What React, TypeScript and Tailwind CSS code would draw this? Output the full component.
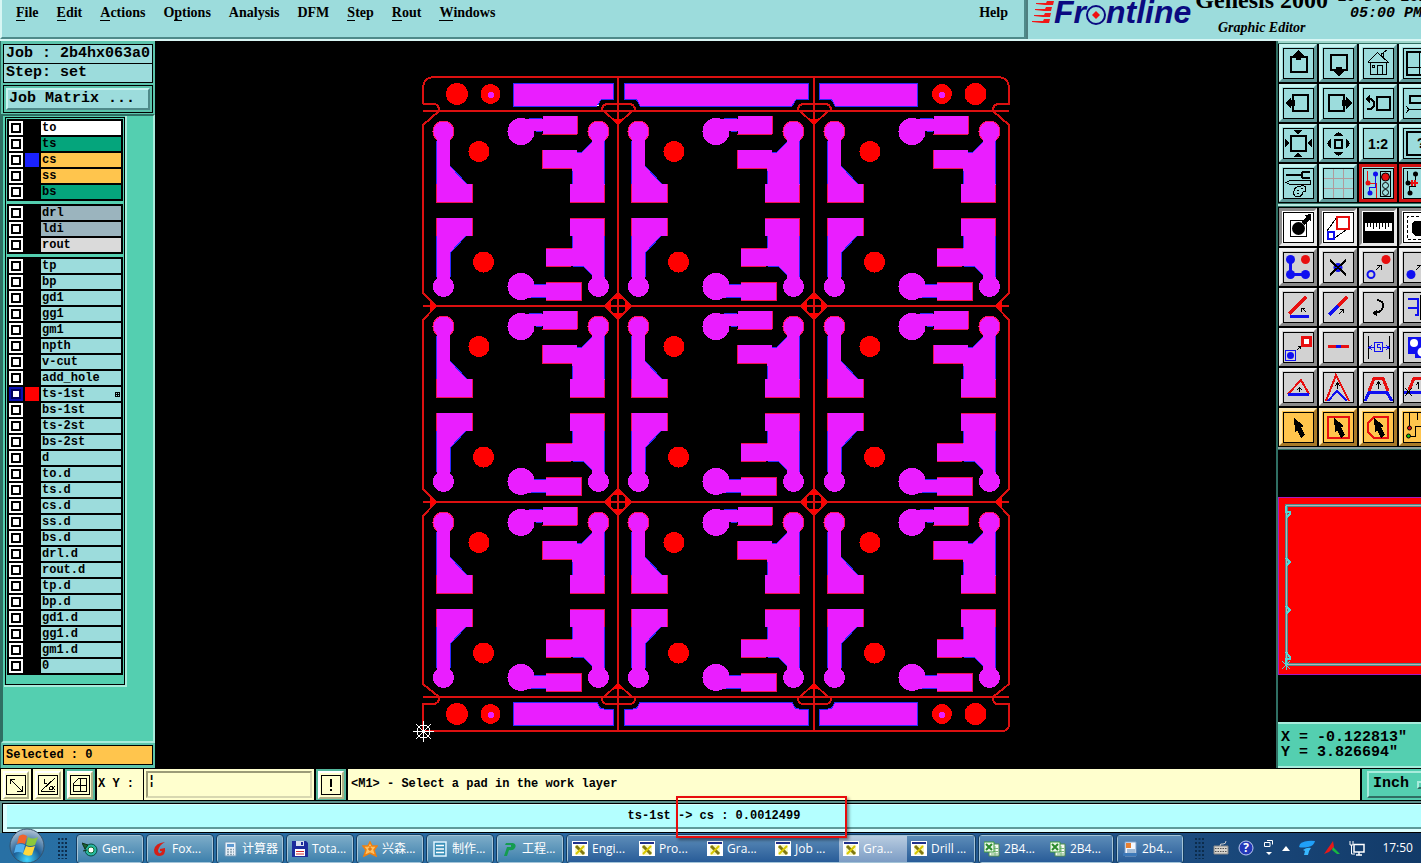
import React from "react";

type Kids = { children?: React.ReactNode };

const MENUS: [string, string, string][] = [
  ["", "F", "ile"],
  ["", "E", "dit"],
  ["", "A", "ctions"],
  ["O", "p", "tions"],
  ["Analysis", "", ""],
  ["DFM", "", ""],
  ["", "S", "tep"],
  ["", "R", "out"],
  ["", "W", "indows"],
];

function MenuBar() {
  return (
    <nav className="flex min-w-0 flex-1 items-start justify-between border-r-2 border-b-2 border-l-2 border-r-[#4f8a8a] border-b-[#4f8a8a] border-l-[#d8f6f4] bg-[#9cdcdc] pr-4 pl-[14px] pt-1">
      <div className="flex gap-[18px]">
        {MENUS.map(([a, u, b]) => (
          <button key={a + u + b} className="flex h-[18px] text-[14px] leading-[18px] font-bold">
            {a}
            {u && <span className="h-[17px] border-b border-black">{u}</span>}
            {b}
          </button>
        ))}
      </div>
      <button className="text-[14px] leading-[18px] font-bold">Help</button>
    </nav>
  );
}

function Logo() {
  return (
    <div className="flex w-[395px] shrink-0 items-start overflow-hidden border-l-2 border-[#4f7f80] bg-[#9cdcdc] pl-1">
      <svg width="22" height="26" viewBox="0 0 22 26" className="shrink-0" fill="#f01818">
        <path d="M4 3L14 3L15 1H22L21 5H13L4 4ZM3 9L13 9L14 7H20L19 11H12L3 10ZM2 15L12 15L13 13H19L18 17H11L2 16ZM0 21L11 21L12 19H18L17 23H10L0 22Z" />
      </svg>
      <div className="flex items-start font-['Liberation_Sans',sans-serif] text-[32px] leading-[24px] font-bold text-[#0a0a80] italic">
        Fr
        <svg width="20" height="26" viewBox="0 0 20 26" className="shrink-0">
          <circle cx="10" cy="15" r="9" fill="#9cdcdc" stroke="#0a0a80" strokeWidth="2" />
          <path d="M10 11L14 15L10 19L6 15Z" fill="#f01010" />
        </svg>
        ntline
      </div>
      <div className="-mt-3 ml-1 flex shrink-0 flex-col items-center">
        <span className="text-[24px] leading-[24px] font-bold">Genesis 2000</span>
        <span className="mt-2 text-[14px] leading-[16px] font-bold italic">Graphic Editor</span>
      </div>
      <div className="-mt-[10px] ml-[10px] flex shrink-0 flex-col items-start font-['Liberation_Mono',monospace] text-[15px] leading-[16px] font-bold italic">
        <span>10 Dec 2015</span>
        <span className="pl-3">05:00 PM</span>
      </div>
    </div>
  );
}

type Layer = { name: string; bg?: string; swatch?: string; work?: boolean };
const GROUPS: Layer[][] = [
  [
    { name: "to", bg: "bg-white" },
    { name: "ts", bg: "bg-[#05a57c]" },
    { name: "cs", bg: "bg-[#ffc54d]", swatch: "bg-[#1a22ff]" },
    { name: "ss", bg: "bg-[#ffc54d]" },
    { name: "bs", bg: "bg-[#05a57c]" },
  ],
  [
    { name: "drl", bg: "bg-[#9bb4be]" },
    { name: "ldi", bg: "bg-[#9bb4be]" },
    { name: "rout", bg: "bg-[#dadada]" },
  ],
  [
    "tp", "bp", "gd1", "gg1", "gm1", "npth", "v-cut", "add_hole", "ts-1st", "bs-1st", "ts-2st", "bs-2st", "d",
    "to.d", "ts.d", "cs.d", "ss.d", "bs.d", "drl.d", "rout.d", "tp.d", "bp.d", "gd1.d", "gg1.d", "gm1.d", "0",
  ].map((name) => (name === "ts-1st" ? { name, swatch: "bg-[#ff0000]", work: true } : { name })),
];

function LayerRow({ layer }: { layer: Layer }) {
  return (
    <label className="flex h-[14px] gap-[2px]">
      <input
        type="checkbox"
        defaultChecked={layer.work}
        className={
          "m-0 h-[14px] w-[14px] shrink-0 appearance-none bg-white " +
          (layer.work
            ? "shadow-[inset_0_0_0_2px_#0a10b0,inset_0_0_0_4px_#00005c]"
            : "shadow-[inset_0_0_0_2px_white,inset_0_0_0_4px_black]")
        }
      />
      <span className={"w-[14px] shrink-0 " + (layer.swatch ?? "bg-black")} />
      <span
        className={"flex flex-1 items-center justify-between pr-px pl-px text-[12px] leading-[14px] " + (layer.bg ?? "bg-[#9cdcdc]")}
      >
        {layer.name}
        {layer.work && (
          <svg width="5" height="5" viewBox="0 0 5 5" shapeRendering="crispEdges">
            <path d="M0 0H5V5H0ZM1 1V2H2V1ZM3 1V2H4V1ZM1 3V4H2V3ZM3 3V4H4V3Z" fillRule="evenodd" />
          </svg>
        )}
      </span>
    </label>
  );
}

function LeftPanel() {
  return (
    <aside className="flex w-[155px] shrink-0 flex-col border-l border-[#2f6f63] bg-[#5cc4ac] pb-[3px] font-['Liberation_Mono',monospace] font-bold">
      <div className="mx-[2px] mt-[3px] border border-black bg-[#9cdcdc] text-[15px] leading-[18px]">
        <div className="border-b border-black pl-[2px] whitespace-pre">Job : 2b4hx063a0</div>
        <div className="pl-[2px] whitespace-pre">Step: set</div>
      </div>
      <div className="mx-[2px] mt-[2px] border border-black p-[2px]">
        <button className="block h-[22px] w-full border-2 border-t-[#c8f4f0] border-r-[#4f8a8a] border-b-[#4f8a8a] border-l-[#c8f4f0] bg-[#9cdcdc] pl-px text-left text-[15px] leading-[18px]">
          Job Matrix ...
        </button>
      </div>
      <div className="mt-px flex flex-1 flex-col border-2 border-t-[#2f6f63] border-r-[#a8ecdc] border-b-[#a8ecdc] border-l-[#2f6f63] bg-[#54cfb0]">
        <div className="mr-[26px] ml-px border-r-2 border-b-2 border-[#a8ecdc]">
          <div className="mt-px ml-px flex flex-col gap-[3px] border border-black p-px pb-[9px]">
            {GROUPS.map((g, i) => (
              <div key={i} className="flex flex-col gap-[2px] bg-black p-[2px]">
                {g.map((l) => (
                  <LayerRow key={l.name} layer={l} />
                ))}
              </div>
            ))}
          </div>
        </div>
      </div>
      <div className="mx-[2px] mt-[2px] h-5 border border-black bg-[#ffc54d] pl-[2px] text-[12px] leading-[18px]">Selected : 0</div>
    </aside>
  );
}

const X = [423, 618, 814, 1009];
const Y = [111, 306, 502, 697];

function Cell({ x, y }: { x: number; y: number }) {
  return (
    <g transform={`translate(${x} ${y})`}>
      <g fill="#ea1eff">
        <circle cx="20.500" cy="20.500" r="10.500" stroke="#ff1060" />
        <path d="M13.500 20H27V55L44 73H49V91H13.500Z" />
        <path d="M13.500 107H49V125H43L27 142V176H13.500Z" />
        <circle cx="20.500" cy="175.500" r="10.500" />
        <circle cx="98" cy="20.500" r="13.500" />
        <path d="M98 7.500H120V5H154V23H120V20H98Z" />
        <circle cx="175.500" cy="20.500" r="10.500" stroke="#ff1060" />
        <path d="M181.500 20V91H147V73H149V57H119V39H154V41H159L169 31V20Z" />
        <path d="M147 107H181.500V176H169V164L160 155H123V137H149V125H147Z" />
        <circle cx="175.500" cy="175.500" r="10.500" />
        <circle cx="98" cy="175.500" r="13.500" />
        <path d="M98 173.500H123V171H158V189H123V186.500H98Z" />
      </g>
      <g fill="none" stroke="#2a2aff">
        <path d="M13.500 30V73M27 55L44 73M13.500 125V166M43 125L27 142V166M106 7.500H119M113 20H119M154 41H159L169 31M181.500 30V73M149 60V73M149 125V137M150 155H160L169 164M181.500 125V166M111 173.500H123M108 186.500H123" />
      </g>
      <g fill="none" stroke="#f01050">
        <path d="M13.500 73V91H49V73M49 107V125M13.500 107V125M119 23H154M154 5V23M149 57H119V39M147 91H181.500V74M181.500 125V107H147M123 155H148M123 137H149M123 171H158V189H123" />
      </g>
      <circle cx="56" cy="40.500" r="10.500" fill="#f00" />
      <circle cx="60.500" cy="151" r="10.500" fill="#f00" />
    </g>
  );
}

function Board() {
  return (
    <svg
      viewBox="155 41 1121 727"
      className="h-full w-full"
      shapeRendering="crispEdges"
      role="img"
      aria-label="Panel artwork"
    >
      {[0, 1, 2].map((r) => [0, 1, 2].map((c) => <Cell key={`${r}${c}`} x={X[c]} y={Y[r]} />))}
      <g fill="#ea1eff" stroke="#2a2aff">
        <path d="M513 83H613V99H604Q600 99 599 103L597 106H513Z" />
        <path d="M624 83H808V99H799Q795 99 794 103L792 106H640L638 102Q637 99 633 99H624Z" />
        <path d="M819 83H917V106H835L833 102Q832 99 828 99H819Z" />
        <path d="M513 702H597L599 706Q600 709 604 709H613V725H513Z" />
        <path d="M640 702H792L794 706Q795 709 799 709H808V725H624V709H633Q637 709 638 706Z" />
        <path d="M835 702H917V725H819V709H828Q832 709 833 706Z" />
      </g>
      <g fill="none" stroke="#dc1010" strokeWidth="2">
        <path d="M423 104V89Q423 77 435 77H997Q1009 77 1009 89V104H998Q993 105 993 110V111L1009 125V293L996 306L1009 320V489L996 502L1009 516V684L993 697V700Q994 704 998 704H1009V724Q1009 731 1002 731H423V704H434Q439 703 439 698V697L423 684V516L436 502L423 489V320L436 306L423 293V125L439 111V109Q438 104 434 104H423" />
        <path d="M423 111H1009M423 306H1009M423 502H1009M423 697H1009M618 77V731M814 77V731" />
        {[618, 814].map((x) => (
          <g key={x} transform={`translate(${x} 0)`}>
            <path d="M-16 111V109Q-15 104 -10 104H11Q16 104 17 109V111M-14 111L0 124L14 111" />
            <path d="M-16 697V700Q-15 704 -10 704H11Q16 704 17 700V697M-14 697L0 684L14 697" />
            {[306, 502].map((y) => (
              <g key={y}>
                <path d={`M-13 ${y}L0 ${y - 13}L13 ${y}L0 ${y + 13}Z`} />
                <path
                  d={`M-13 ${y}L-7 ${y - 5}V${y + 5}ZM13 ${y}L7 ${y - 5}V${y + 5}ZM0 ${y - 13}L5 ${y - 7}H-5ZM0 ${y + 13}L5 ${y + 7}H-5Z`}
                  fill="#f00"
                  stroke="none"
                />
              </g>
            ))}
            <path d="M0 125L-5 119H5ZM0 683L-5 689H5Z" fill="#f00" stroke="none" />
          </g>
        ))}
        {[306, 502].map((y) => (
          <path
            key={y}
            d={`M437 ${y}L430 ${y - 5}V${y + 5}ZM995 ${y}L1002 ${y - 5}V${y + 5}Z`}
            fill="#f00"
            stroke="none"
          />
        ))}
      </g>
      {[94, 714].map((y) => (
        <g key={y} fill="#f00">
          <circle cx="457" cy={y} r="11" />
          <circle cx="490.500" cy={y} r="10" />
          <circle cx="942" cy={y} r="10" />
          <circle cx="975.500" cy={y} r="11" />
          <circle cx="491" cy={y + 1} r="3" fill="#ea1eff" />
          <circle cx="942" cy={y + 1} r="3" fill="#ea1eff" />
        </g>
      ))}
      <g fill="none" stroke="#fff">
        <path d="M423.500 721V742M413 731.500H434M416 724L431 739M431 724L416 739" />
        <circle cx="423.500" cy="731.500" r="6.500" />
        <path d="M597 105.500H599" />
      </g>
    </svg>
  );
}

const TONES = {
  teal: "border-t-[#c8f4f0] border-l-[#c8f4f0] border-r-[#5f9a9a] border-b-[#5f9a9a] bg-[#9cdcdc]",
  red: "border-[#d01414] bg-[#9cdcdc]",
  white: "border-t-[#8c8c8c] border-l-[#8c8c8c] border-r-[#e8e8e8] border-b-[#e8e8e8] bg-white",
  gray: "border-t-[#f2f2f2] border-l-[#f2f2f2] border-r-[#8a8a8a] border-b-[#8a8a8a] bg-[#d2d2d2]",
  gold: "border-t-[#ffe9b0] border-l-[#ffe9b0] border-r-[#a87a28] border-b-[#a87a28] bg-[#ffc54d]",
};

function Tool({ name, tone, children }: Kids & { name: string; tone: keyof typeof TONES }) {
  return (
    <button aria-label={name} className={"flex h-[38px] w-[38px] items-center justify-center border-[3px] " + TONES[tone]}>
      <svg
        width="31"
        height="31"
        viewBox="0 0 31 31"
        fill="none"
        stroke="#000"
        shapeRendering="crispEdges"
        className="[&_circle]:[shape-rendering:auto]"
      >
        <rect x=".5" y=".5" width="30" height="30" />
        {children}
      </svg>
    </button>
  );
}

const RED = "#e81010";
const BLUE = "#1010f0";
const ARROW = "M11 6L21 14L18 15L22 23L18 26L14 18L12 20Z";

const VIEW_TOOLS: [string, keyof typeof TONES, React.ReactNode][] = [
  ["Pan up", "teal", <><path strokeWidth="2" d="M8 9H24V24H8Z" /><path fill="#000" stroke="none" d="M15.500 2L21 8H18V12H13V8H10Z" /></>],
  ["Pan down", "teal", <><path strokeWidth="2" d="M8 7H24V22H8Z" /><path fill="#000" stroke="none" d="M16 29L21 23H19V19H13V23H11Z" /></>],
  ["Home view", "teal", <path d="M4.500 14.500L14.500 4.500L25.500 14.500H4.500M7.500 15V26.500H23.500V15M14.500 26V17.500H19.500V26M9.500 17.500H11.500V19.500H9.500ZM18.500 8V5M20.500 10V5H18M24 2L20 5" />],
  ["Window view", "teal", <><path strokeWidth="2" d="M31 4H4V27H31" /><path d="M16.500 4V27M4 19.500H31" /></>],
  ["Pan left", "teal", <><path strokeWidth="2" d="M10 7H25V23H10Z" /><path fill="#000" stroke="none" d="M2 15L8 9V12H12V18H8V21Z" /></>],
  ["Pan right", "teal", <><path strokeWidth="2" d="M6 7H21V23H6Z" /><path fill="#000" stroke="none" d="M29 15L23 9V12H19V18H23V21Z" /></>],
  ["Previous view", "teal", <><path strokeWidth="2" d="M14 9H27V22H14ZM4 21H8Q11 20 11 16Q11 11 6 11" /><path fill="#000" stroke="none" d="M2 11L7 6V15Z" /></>],
  ["Pop view", "teal", <><path strokeWidth="2" d="M31 8H7V15H31" /><path d="M3 18L6 21.500L3 25M6 21.500H31" /></>],
  ["Zoom in", "teal", <><path strokeWidth="2" d="M8 8H23V23H8Z" /><path fill="#000" stroke="none" d="M10 2H20L15 6ZM10 29H20L15 25ZM2 10V20L6 15ZM29 10V20L25 15Z" /></>],
  ["Zoom out", "teal", <><path strokeWidth="2" d="M12 12H19V20H12Z" /><path fill="#000" stroke="none" d="M10 8H21L15.500 4ZM10 24H21L15.500 28ZM8 10V21L4 15.500ZM23 10V21L27 15.500Z" /></>],
  ["Scale", "teal", <text x="15" y="21" textAnchor="middle" fill="#000" stroke="none" className="font-['Liberation_Sans',sans-serif] text-[14px] font-bold">1:2</text>],
  ["Query", "teal", <><path strokeWidth="2" d="M31 4H4V27H31" /><text x="14" y="20" fill="#000" stroke="none" className="font-['Liberation_Mono',monospace] text-[14px] font-bold">?</text></>],
  ["Settings", "teal", <><path strokeWidth="2" d="M3 7H18M27 4H20L18 7L20 10H27" /><path d="M3 14.500L7 12.500H27V16.500H7ZM11 23Q12 18 18 18Q23 17 23 21Q23 24 20 24Q19 29 14 29Q10 29 11 23ZM14 22H16M18 20H20M14 25H16" /></>],
  ["Grid", "teal", <path stroke="#b09a9c" d="M10.500 1V30M20.500 1V30M1 10.500H30M1 20.500H30" />],
  ["Online DRC", "red", <><path stroke={RED} d="M4.500 3V15.500H13.500V30" /><path stroke={BLUE} d="M12.500 6V19H6V25" /><circle cx="5" cy="15" r="2.500" fill={RED} stroke="none" /><circle cx="12.500" cy="6" r="2.500" fill={BLUE} stroke="none" /><circle cx="7" cy="25" r="2.500" fill={BLUE} stroke="none" /><path d="M17.500 3.500H27.500V28.500H17.500Z" /><circle cx="22.500" cy="9" r="4" fill={RED} /><circle cx="22.500" cy="17.500" r="3" /><circle cx="22.500" cy="24.500" r="3" /></>],
  ["Net check", "red", <><path d="M12.500 6V18.500H6V25M4.500 3V15" /><path stroke={RED} strokeWidth="2" d="M6 15H15M9 12V18M12 12V18" /><circle cx="5" cy="15" r="2.500" fill="#000" stroke="none" /><circle cx="12.500" cy="6" r="2.500" fill="#000" stroke="none" /><circle cx="7" cy="25" r="2.500" fill="#000" stroke="none" /><path d="M18.500 1V30" /></>],
];

const EDIT_TOOLS: [string, keyof typeof TONES, React.ReactNode][] = [
  ["Resize pad", "white", <><path d="M7.500 8.500H23.500V24.500H7.500Z" /><circle cx="15.500" cy="16.500" r="6.500" fill="#000" stroke="none" /><path fill="#000" stroke="none" d="M28 2V9L26 8L21 13L18 10L23 5L21 3Z" /></>],
  ["Transform", "white", <><path d="M4 19L14 5M10 27L26 16" /><path stroke={RED} strokeWidth="2" d="M14 5H26V17H14Z" /><path stroke={BLUE} strokeWidth="2" d="M5 20H11V27H5Z" /></>],
  ["Measure", "white", <><path fill="#000" d="M1 1H30V30H1Z" /><path fill="#fff" stroke="none" d="M2 11H29V19H2Z" /><path d="M4.500 11V15M7.500 11V15M10.500 11V17M13.500 11V15M16.500 11V17M19.500 11V15M22.500 11V17M25.500 11V15" /></>],
  ["Select pad", "white", <><path strokeDasharray="3 2" d="M31 4.500H4.500V27.500H31" /><path fill="#000" d="M9 12L12 9H20V23H12L9 20Z" /></>],
  ["Copy", "gray", <><path stroke={BLUE} strokeWidth="3" d="M7.500 7V22.500H23" /><circle cx="7.500" cy="7.500" r="4.500" fill={BLUE} stroke="none" /><circle cx="7.500" cy="22.500" r="4.500" fill={BLUE} stroke="none" /><circle cx="22.500" cy="22.500" r="4.500" fill={BLUE} stroke="none" /><circle cx="22.500" cy="7.500" r="4.500" fill={RED} stroke="none" /></>],
  ["Delete", "gray", <><circle cx="15" cy="15.500" r="4.500" fill={BLUE} stroke="none" /><path strokeWidth="2" d="M7 8L23 23M23 8L7 23" /></>],
  ["Move", "gray", <><circle cx="8" cy="22.500" r="3.500" stroke={BLUE} strokeWidth="2" /><circle cx="23" cy="7.500" r="4.500" fill={RED} stroke="none" /><path d="M13 18L18 13M14 13.500H18.500V18" /></>],
  ["Move to layer", "gray", <><circle cx="8" cy="22.500" r="4.500" fill={BLUE} stroke="none" /><path d="M13 18L18 13M14 13.500H18.500V18" /></>],
  ["Rotate line", "gray", <><path stroke={RED} strokeWidth="3" d="M6 22L23 5" /><path stroke={BLUE} strokeWidth="3" d="M7 24.500H26" /><path d="M23 20L19 16M18.500 20V16.500H22" /></>],
  ["Stretch line", "gray", <><path stroke={BLUE} strokeWidth="3" d="M6 23L15 14" /><path stroke={RED} strokeWidth="3" d="M15 14L24 5" /><path d="M16 22L20 18M17 17.500H20.500V21" /></>],
  ["Arc", "gray", <><path strokeWidth="2" d="M14 8Q21 9 20 15Q19 20 12 21" /><path d="M10 21L13 19V23Z" fill="#000" /></>],
  ["Align", "gray", <><path stroke={BLUE} strokeWidth="2" d="M5 7H15V24M5 16H15V23H12" /><path d="M17.500 3V28" /></>],
  ["Copy pad", "gray", <><path stroke={RED} strokeWidth="3" d="M19 5H27V13H19Z" fill="#fff" /><path stroke={BLUE} d="M2.500 18.500H12.500V28.500H2.500Z" /><circle cx="7.500" cy="23.500" r="3.500" fill={BLUE} stroke="none" /><path d="M14 18L18 14M15 14.500H17.500V17" /></>],
  ["Join", "gray", <><path stroke={RED} strokeWidth="3" d="M5 14.500H26" /><path stroke={BLUE} strokeWidth="3" d="M13 14.500H18" /></>],
  ["Spacing", "gray", <><path d="M5.500 4V27M26.500 4V27" /><path stroke={BLUE} d="M7 15.500H11M20 15.500H25M9 13L6 15.500L9 18M23 13L26 15.500L23 18M11.500 10.500H19.500V19.500H11.500ZM17 12.500H14.500V15.500H17.500V18M14 15.500H18" /></>],
  ["Surface", "gray", <><path fill={BLUE} stroke="none" d="M5 5H20V10H31V26H12V22H5Z" /><circle cx="11" cy="11" r="4" fill="#fff" stroke="none" /><circle cx="19" cy="20" r="4.500" fill="#fff" stroke="none" /></>],
  ["Angle", "gray", <><path stroke={RED} strokeWidth="2" d="M5 22L18 8L26 22" /><path stroke={BLUE} strokeWidth="3" d="M5 22.500H26" /><path d="M16.500 20V16M14 18L16.500 15.500L19 18" /></>],
  ["Peak", "gray", <><path stroke={RED} strokeWidth="2" d="M3 29L13 3L26 29" /><path stroke={BLUE} strokeWidth="2" d="M5 29L14 19L24 29" /><path d="M14.500 17V11M12 14L14.500 11L17 14" /></>],
  ["Trapezoid", "gray", <><path stroke={BLUE} strokeWidth="3" d="M2 29L6 20.500H24L29 29" /><path stroke={RED} strokeWidth="3" d="M6 19L11 6.500H20L25 19" /><path d="M15.500 17V10M13 13L15.500 10L18 13" /></>],
  ["Trapezoid trim", "gray", <><path stroke={BLUE} strokeWidth="3" d="M1 20.500H31" /><path stroke={RED} strokeWidth="3" d="M6 18L11 6.500H31" /><path d="M15.500 17V10M13 13L15.500 10M2 16L9 24M9 16L2 24" /></>],
  ["Select", "gold", <path fill="#000" stroke="none" d={ARROW} />],
  ["Select in frame", "gold", <><path stroke={RED} strokeWidth="2" d="M5 5H26V26H5Z" /><path fill="#000" stroke="none" d={ARROW} /></>],
  ["Select in polygon", "gold", <><path stroke={RED} strokeWidth="2" d="M11 5H25V26H11L5 20V11Z" /><path fill="#000" stroke="none" d={ARROW} /></>],
  ["Select net", "gold", <><path d="M6.500 1V14M7 24.500H12.500V14.500H18V5.500H31M14.500 1V8" /><circle cx="6.500" cy="16" r="2" fill={RED} /><circle cx="5.500" cy="24" r="2" fill="#10c010" /></>],
];

function ToolGrid({ tools }: { tools: [string, keyof typeof TONES, React.ReactNode][] }) {
  return (
    <div className="grid w-[161px] grid-cols-4 gap-y-[2px] bg-black pl-px">
      {tools.map(([name, tone, art]) => (
        <Tool key={name} name={name} tone={tone}>
          {art}
        </Tool>
      ))}
    </div>
  );
}

function RightPanel() {
  return (
    <aside className="flex w-[145px] shrink-0 flex-col overflow-hidden border-l-2 border-[#2f6f63] bg-black">
      <div className="h-[3px] shrink-0 border-b border-[#2f6f63] bg-[#9fd8cc]" />
      <ToolGrid tools={VIEW_TOOLS} />
      <div className="my-px h-1 shrink-0 border-y border-[#2f6f63] bg-[#b8e8e0]" />
      <ToolGrid tools={EDIT_TOOLS} />
      <div className="mt-px h-[3px] shrink-0 border-b border-[#2f6f63] bg-[#8f9f9c]" />
      <div className="flex min-h-0 flex-1 items-center">
        <svg width="160" height="178" viewBox="0 0 160 178" fill="none" shapeRendering="crispEdges" className="shrink-0">
          <path d="M.5 .5H170V177.500H.5Z" fill="#f00" stroke="#a818c0" />
          <path stroke="#4c8c8c" strokeWidth="3" d="M160 8.500H8.500V167.500H160" />
          <path stroke="#b4b4b4" d="M160 8.500H8.500V167.500H160" />
          <path stroke="#50d8d8" strokeWidth="2" d="M8 9V15H12V17L8 21M8 61L12 65L8 69M8 109L12 113L8 117M8 155L12 160V162H8V168" />
          <path stroke="#50d8d8" d="M4 164L12 172M12 164L4 172M8.500 163V173" />
        </svg>
      </div>
      <div className="h-[46px] shrink-0 border-y-2 border-[#a8ecdc] bg-[#54cfb0] py-[6px] pl-[3px] font-['Liberation_Mono',monospace] text-[15px] leading-[15px] font-bold whitespace-pre">
        <div>X = -0.122813"</div>
        <div>Y = 3.826694"</div>
      </div>
    </aside>
  );
}

function SmallTool({ name, children, green }: Kids & { name: string; green?: boolean }) {
  return (
    <div className={"flex shrink-0 items-center justify-center border-r-2 border-black px-[2px] " + (green ? "bg-[#54b79c]" : "bg-[#ffffce]")}>
      <button aria-label={name} className="flex h-[28px] w-[26px] items-center justify-center border-2 border-t-white border-r-[#b0b088] border-b-[#b0b088] border-l-white bg-[#ffffce]">
        <svg width="20" height="20" viewBox="0 0 20 20" fill="none" stroke="#000" shapeRendering="crispEdges" className="shrink-0">
          <rect x=".5" y=".5" width="19" height="19" />
          {children}
        </svg>
      </button>
    </div>
  );
}

function CommandBar() {
  return (
    <div className="flex h-[33px] shrink-0 border-b border-black bg-black pt-px font-['Liberation_Mono',monospace] text-[12px] font-bold">
      <div className="w-px shrink-0" />
      <SmallTool name="Snap">
        <path d="M4 4L16 16M4 9V4H9M16 11V16H11" />
      </SmallTool>
      <SmallTool name="Angle snap">
        <path d="M3 16.500H17M3 16L17 3M6 4V8H9M12 11H14V14H11V12M17 11L15 13L17 15" />
      </SmallTool>
      <SmallTool name="Grid snap" green>
        <path d="M3.500 8.500L8.500 3.500H16.500V16.500H3.500ZM10.500 4V16M4 10.500H16" />
      </SmallTool>
      <label htmlFor="xy" className="w-[47px] shrink-0 border-r border-black bg-[#ffffce] pl-px leading-[30px]">
        X Y :
      </label>
      <div className="w-[172px] shrink-0 border-r-2 border-black bg-[#ffffce] p-[2px]">
        <input
          id="xy"
          placeholder="¦"
          className="h-full w-full border-2 border-t-[#9c9c78] border-r-[#d8d8b0] border-b-[#d8d8b0] border-l-[#9c9c78] bg-[#ffffce] pb-2 outline-none placeholder:text-black"
        />
      </div>
      <SmallTool name="Message" green>
        <path strokeWidth="2" d="M10 4V12M10 14V16" />
      </SmallTool>
      <div className="min-w-0 flex-1 bg-[#ffffce] pl-[3px] leading-[30px]">&lt;M1&gt; - Select a pad in the work layer</div>
      <div className="w-[61px] shrink-0 overflow-hidden border-l-2 border-black bg-[#54cfb0] pt-[2px] pl-[5px]">
        <button className="flex h-[27px] w-[80px] items-center gap-2 border-2 border-t-[#a8ecdc] border-r-[#2f6f63] border-b-[#2f6f63] border-l-[#a8ecdc] pl-1 text-[15px]">
          Inch
          <span className="h-2 w-4 border-2 border-t-[#a8ecdc] border-r-[#2f6f63] border-b-[#2f6f63] border-l-[#a8ecdc]" />
        </button>
      </div>
    </div>
  );
}

function StatusBar() {
  return (
    <div className="relative flex h-8 shrink-0 flex-col border-t-2 border-l-2 border-[#5d908c] bg-white pb-[2px]">
      <div className="flex flex-1 flex-col border-y border-l border-black bg-[#dcffff] pt-px pb-[3px] pl-1">
        <div className="flex-1 border-b-2 border-[#5f9a9a] bg-[#b4ffff] text-center font-['Liberation_Mono',monospace] text-[12px] leading-[22px] font-bold">
          ts-1st -&gt; cs : 0.0012499
        </div>
      </div>
      <div className="absolute -top-[7px] left-1/2 -ml-[36px] h-[42px] w-[171px] border-2 border-[#e80c0c] shadow-[2px_2px_3px_rgba(0,0,0,0.45)]" />
    </div>
  );
}

function Ic({ children }: Kids) {
  return (
    <svg width="16" height="16" viewBox="0 0 16 16" className="shrink-0" fill="none">
      {children}
    </svg>
  );
}

const XIcon = (
  <Ic>
    <path d="M0 0H16V15H0Z" fill="#fff" />
    <path d="M1 1H15V3H1Z" fill="#20308c" />
    <path d="M3 4H13V14H3Z" fill="#f8f8c0" />
    <path d="M4 5L12 13" stroke="#807810" strokeWidth="3" />
    <path d="M12 5L4 13" stroke="#d8c800" strokeWidth="2" />
  </Ic>
);
const XlsIcon = (
  <Ic>
    <path d="M5 3H15V15H5Z" fill="#f4f8f4" stroke="#4c8c4c" />
    <path d="M7 7.500H14M7 10.500H14M7 13H14M11 5V15" stroke="#7cb87c" />
    <path d="M0 1H10V11H0Z" fill="#eaf6ea" stroke="#3c9c3c" />
    <path d="M2 3L8 9M8 3L2 9" stroke="#2c8c2c" strokeWidth="2" />
  </Ic>
);

type Task = { label: string; icon: React.ReactNode; active?: boolean };
const TASK_GROUPS: { width: string; tasks: Task[] }[] = [
  { width: "w-[66px]", tasks: [{ label: "Gen...", icon: <Ic><circle cx="9" cy="9" r="6" fill="#28b8a0" stroke="#084c40" /><circle cx="9" cy="9" r="3" fill="#fff" stroke="#106c30" /><path d="M0 2L6 4L3 8ZM1 10L5 9" fill="#186830" stroke="#10301c" /></Ic> }] },
  { width: "w-[66px]", tasks: [{ label: "Fox...", icon: <Ic><path d="M13 1Q3 2 2 9Q2 15 8 15Q14 14 13 7L8 8V10H10Q9 13 7 12Q5 10 7 7Q8 4 13 1Z" fill="#d42018" /></Ic> }] },
  { width: "w-[66px]", tasks: [{ label: "计算器", icon: <Ic><path d="M3 1H14V15H3Z" fill="#e8f0f8" stroke="#7098b8" /><path d="M5 3H12V6H5Z" fill="#5c98d0" /><path d="M5 8.500H12M5 11H12M5 13.500H12" stroke="#88a0b0" strokeWidth="1.500" strokeDasharray="2 1" /></Ic> }] },
  { width: "w-[66px]", tasks: [{ label: "Tota...", icon: <Ic><path d="M0 0H14L16 2V16H0Z" fill="#1c2c9c" /><path d="M4 0H12V5H4Z" fill="#d8e0f0" /><path d="M9 1H11V4H9Z" fill="#1c2c9c" /><path d="M3 8H13V15H3Z" fill="#fff" /><path d="M4 10.500H12M4 13H12" stroke="#d03030" /></Ic> }] },
  { width: "w-[66px]", tasks: [{ label: "兴森...", icon: <Ic><path d="M8 1L10 5H15L12 9L14 15L8 12L2 15L4 9L1 5H6Z" fill="#ffc060" stroke="#f08010" strokeWidth="1.500" /><path d="M8 5V10M6 8H10" stroke="#d06000" /></Ic> }] },
  { width: "w-[66px]", tasks: [{ label: "制作...", icon: <Ic><path d="M2 1H14V15H2Z" fill="#3c90b8" stroke="#e0f4ff" strokeWidth="1.500" /><path d="M4 4.500H12M4 8H12M4 11.500H12" stroke="#fff" strokeWidth="1.500" /></Ic> }] },
  { width: "w-[66px]", tasks: [{ label: "工程...", icon: <Ic><path d="M4 2H11Q15 3 13 7Q11 10 7 9L5 15H2L5 6H9V4H3Z" fill="#149c50" /></Ic> }] },
  {
    width: "w-[68px]",
    tasks: [
      { label: "Engi...", icon: XIcon },
      { label: "Pro...", icon: XIcon },
      { label: "Gra...", icon: XIcon },
      { label: "Job ...", icon: XIcon },
      { label: "Gra...", icon: XIcon, active: true },
      { label: "Drill ...", icon: XIcon },
    ],
  },
  { width: "w-[67px]", tasks: [{ label: "2B4...", icon: XlsIcon }, { label: "2B4...", icon: XlsIcon }] },
  { width: "w-[66px]", tasks: [{ label: "2b4...", icon: <Ic><path d="M3 1H14V15H3Z" fill="#f4f8ff" stroke="#80a0c8" /><path d="M4 2H9V7H4Z" fill="#e88030" /><path d="M5 9H13M5 11H13" stroke="#5080b0" /><path d="M1 12H15V15H1Z" fill="#3c78b8" /></Ic> }] },
];

function Grip() {
  return (
    <svg width="9" height="22" viewBox="0 0 9 22" className="shrink-0" stroke="#0c2c4c" strokeWidth="2">
      <path d="M1 1V22M4.500 1V22M8 1V22" strokeDasharray="2 2" />
    </svg>
  );
}

function TaskBar() {
  return (
    <div className="flex h-[30px] shrink-0 items-center bg-gradient-to-r from-[#2870a4] via-[#2a64a0] via-60% to-[#123a68] font-['Open_Sans','Noto_Sans_CJK_SC',sans-serif] text-[12px] text-white">
      <button aria-label="Start" className="relative ml-2 h-[30px] w-[38px] shrink-0">
        <svg width="38" height="38" viewBox="0 0 38 38" className="absolute -top-[5px] left-0">
          <defs>
            <radialGradient id="orb" cx=".5" cy=".9" r=".9">
              <stop offset="0" stopColor="#40d8ff" />
              <stop offset=".45" stopColor="#1c5c94" />
              <stop offset="1" stopColor="#b8c8d8" />
            </radialGradient>
          </defs>
          <circle cx="19" cy="18" r="17" fill="url(#orb)" stroke="#34536c" />
          <path d="M11 8Q15 5 19 8L17 16Q13 14 9 16Z" fill="#f0642c" />
          <path d="M20 9Q25 12 30 9L27 17Q22 19 18 17Z" fill="#8cc83c" />
          <path d="M8 17Q13 15 17 17L15 25Q10 23 6 25Z" fill="#50b0f0" />
          <path d="M18 18Q22 20 27 18L24 27Q20 29 15 26Z" fill="#ffd83c" />
        </svg>
      </button>
      <div className="ml-3">
        <Grip />
      </div>
      <div className="ml-[10px] flex gap-1 pt-px">
        {TASK_GROUPS.map((g, i) => (
          <div key={i} className="flex overflow-hidden rounded-[3px] shadow-[inset_0_0_0_1px_#9cc0d8] outline outline-[#123c60]">
            {g.tasks.map((t, j) => (
              <button
                key={j}
                className={
                  "flex h-[28px] items-center gap-1 border-y border-[#a4c4d8] bg-gradient-to-b pl-1 whitespace-nowrap first:border-l last:border-r " +
                  g.width +
                  (t.active ? " from-[#b8cce0] to-[#7c9cc4]" : i < 7 ? " from-[#7cacc8] to-[#3c80ac]" : " from-[#5c8cb8] to-[#285c98]")
                }
              >
                {t.icon}
                {t.label}
              </button>
            ))}
          </div>
        ))}
      </div>
      <div className="ml-3 flex flex-1 items-center justify-between pr-2">
        <Grip />
        <Ic><path d="M1 6H15V14H1Z" fill="#d8d4cc" stroke="#888" /><path d="M2 8.500H14M2 11.500H14" stroke="#555" strokeDasharray="1.500 1" /><path d="M7 6Q7 3 10 4Q13 4 13 1" stroke="#ccc" /></Ic>
        <Ic><circle cx="8" cy="8" r="7" fill="#2438b8" stroke="#c0ccf0" /><text x="8" y="12" textAnchor="middle" fill="#fff" className="text-[12px] font-bold">?</text></Ic>
        <svg width="9" height="18" viewBox="0 0 9 18" className="shrink-0" fill="none" stroke="#fff"><path d="M3 1.500H8.500V5.500M.5 3.500H6V7.500H.5Z" /><path d="M2 13H8L5 16Z" fill="#fff" stroke="none" /></svg>
        <svg width="8" height="5" viewBox="0 0 8 5" className="shrink-0"><path d="M0 5L4 0L8 5Z" fill="#fff" /></svg>
        <Ic><path d="M1 4Q6 0 16 1Q15 6 9 7Q3 8 0 7Z" fill="#20a0f8" /><path d="M4 10Q8 7 12 8Q10 10 9 15H5L6 11Z" fill="#38b8ff" /></Ic>
        <Ic><path d="M0 14L9 1L10 7L5 12Z" fill="#e81818" /><path d="M9 7L16 14H13L8 10Z" fill="#18b840" /></Ic>
        <Ic><path d="M5 4.500H15V12H5ZM7 15H13M10 12V15" stroke="#fff" strokeWidth="1.500" /><path d="M1 1V5H4V1M2.500 5V14H6" stroke="#fff" /></Ic>
        <span className="ml-2 leading-[18px]">17:50</span>
      </div>
    </div>
  );
}

export default function App() {
  return (
    <div className="flex h-screen flex-col overflow-hidden bg-black font-['Liberation_Serif',serif] text-black">
      <header className="flex h-[41px] shrink-0 border-b-2 border-[#d8f6f4]">
        <MenuBar />
        <Logo />
      </header>
      <main className="flex min-h-0 flex-1">
        <LeftPanel />
        <div className="min-w-0 flex-1">
          <Board />
        </div>
        <RightPanel />
      </main>
      <CommandBar />
      <StatusBar />
      <TaskBar />
    </div>
  );
}
